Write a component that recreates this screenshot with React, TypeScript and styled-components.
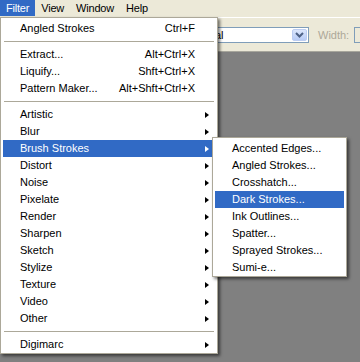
import React from "react";
import styled, { createGlobalStyle } from "styled-components";

const GlobalStyle = createGlobalStyle`
  html, body { margin: 0; padding: 0; background: #808080; }
  body {
    font-family: "Liberation Sans", Arial, sans-serif;
    font-size: 11px;
    color: #000;
  }
`;

const Page = styled.div`
  position: relative;
  width: 360px;
  height: 362px;
  overflow: hidden;
  display: flex;
  flex-direction: column;
  background: #808080;
`;

const MenuBar = styled.div`
  height: 17px;
  background: #ece9d8;
  display: flex;
  align-items: flex-start;
  letter-spacing: -0.2px;
`;

const MenuTitle = styled.div<{ $active?: boolean }>`
  height: 16px;
  line-height: 16px;
  padding: 0 6px;
  background: ${(p) => (p.$active ? "#316ac5" : "transparent")};
  color: ${(p) => (p.$active ? "#fff" : "#000")};
`;

const Toolbar = styled.div`
  height: 33px;
  border-top: 1px solid #ffffff;
  border-bottom: 1px solid #a7a69c;
  background: #ece9d8;
  display: flex;
  align-items: center;
  padding-left: 181px;
  & > * {
    flex-shrink: 0;
  }
`;

const Combo = styled.div`
  box-sizing: border-box;
  width: 128px;
  height: 16px;
  border: 1px solid #7f9db9;
  background: #fff;
  display: flex;
  align-items: center;
  padding-left: 6px;
`;

const ComboText = styled.span`
  flex: 1;
`;

const DropButton = styled.div`
  box-sizing: border-box;
  width: 15px;
  height: 12px;
  margin-right: 1px;
  border-radius: 2px;
  border: 1px solid #bccdf2;
  background: linear-gradient(#dbe6fc, #b7cbf6);
  display: flex;
  align-items: center;
  justify-content: center;
`;

const WidthLabel = styled.span`
  color: #aca899;
  white-space: nowrap;
  margin-left: 9px;
`;

const WidthBox = styled.div`
  box-sizing: border-box;
  width: 30px;
  height: 16px;
  border: 1px solid #7f9db9;
  margin-left: 5px;
`;

const Canvas = styled.div`
  flex: 1;
  background: #808080;
`;

const MenuPanel = styled.div<{ $width: number }>`
  box-sizing: border-box;
  width: ${(p) => p.$width}px;
  background: #fff;
  border: 1px solid #aca899;
  padding: 2px 2px 0 2px;
  box-shadow: 2px 2px 3px rgba(0, 0, 0, 0.55);
`;

const MainMenu = styled(MenuPanel)`
  position: absolute;
  top: 17px;
  left: 0;
  z-index: 10;
`;

const SubMenu = styled(MenuPanel)`
  position: absolute;
  top: -3px;
  left: calc(100% - 3px);
  z-index: 11;
  color: #000;
`;

const Item = styled.div<{ $active?: boolean }>`
  position: relative;
  height: 17px;
  line-height: 17px;
  display: grid;
  grid-template-columns: 1fr auto 4px;
  column-gap: 10px;
  align-items: center;
  padding: 0 6px 0 17px;
  white-space: nowrap;
  background: ${(p) => (p.$active ? "#316ac5" : "transparent")};
  color: ${(p) => (p.$active ? "#fff" : "#000")};
`;

const SubItem = styled.div<{ $active?: boolean }>`
  height: 17px;
  line-height: 17px;
  padding: 0 6px 0 17px;
  white-space: nowrap;
  background: ${(p) => (p.$active ? "#316ac5" : "transparent")};
  color: ${(p) => (p.$active ? "#fff" : "#000")};
`;

const Shortcut = styled.span`
  text-align: right;
`;

const Arrow = styled.span<{ $active?: boolean }>`
  width: 0;
  height: 0;
  border-top: 3.5px solid transparent;
  border-bottom: 3.5px solid transparent;
  border-left: 4px solid ${(p) => (p.$active ? "#fff" : "#000")};
`;

const Separator = styled.div`
  height: 9px;
  display: flex;
  align-items: center;
  padding: 0 1px;
  &::after {
    content: "";
    flex: 1;
    height: 1px;
    background: #aca899;
  }
`;

type Entry =
  | { sep: true }
  | { label: string; shortcut?: string; sub?: boolean; active?: boolean };

const entries: Entry[] = [
  { label: "Angled Strokes", shortcut: "Ctrl+F" },
  { sep: true },
  { label: "Extract...", shortcut: "Alt+Ctrl+X" },
  { label: "Liquify...", shortcut: "Shft+Ctrl+X" },
  { label: "Pattern Maker...", shortcut: "Alt+Shft+Ctrl+X" },
  { sep: true },
  { label: "Artistic", sub: true },
  { label: "Blur", sub: true },
  { label: "Brush Strokes", sub: true, active: true },
  { label: "Distort", sub: true },
  { label: "Noise", sub: true },
  { label: "Pixelate", sub: true },
  { label: "Render", sub: true },
  { label: "Sharpen", sub: true },
  { label: "Sketch", sub: true },
  { label: "Stylize", sub: true },
  { label: "Texture", sub: true },
  { label: "Video", sub: true },
  { label: "Other", sub: true },
  { sep: true },
  { label: "Digimarc", sub: true },
];

const subEntries = [
  "Accented Edges...",
  "Angled Strokes...",
  "Crosshatch...",
  "Dark Strokes...",
  "Ink Outlines...",
  "Spatter...",
  "Sprayed Strokes...",
  "Sumi-e...",
];

const Chevron = () => (
  <svg width="9" height="6" viewBox="0 0 9 6">
    <path d="M1 1 L4.5 4.5 L8 1" fill="none" stroke="#4d6185" strokeWidth="2" />
  </svg>
);

export default function App() {
  return (
    <Page>
      <GlobalStyle />
      <MenuBar>
        <MenuTitle $active>Filter</MenuTitle>
        <MenuTitle>View</MenuTitle>
        <MenuTitle>Window</MenuTitle>
        <MenuTitle>Help</MenuTitle>
      </MenuBar>
      <Toolbar>
        <Combo>
          <ComboText>Normal</ComboText>
          <DropButton>
            <Chevron />
          </DropButton>
        </Combo>
        <WidthLabel>Width:</WidthLabel>
        <WidthBox />
      </Toolbar>
      <Canvas />
      <MainMenu $width={218}>
        {entries.map((e, i) =>
          "sep" in e ? (
            <Separator key={i} />
          ) : (
            <Item key={i} $active={e.active}>
              <span>{e.label}</span>
              <Shortcut>{e.shortcut ?? ""}</Shortcut>
              {e.sub ? <Arrow $active={e.active} /> : <span />}
              {e.active && (
                <SubMenu $width={135}>
                  {subEntries.map((s) => (
                    <SubItem key={s} $active={s === "Dark Strokes..."}>
                      {s}
                    </SubItem>
                  ))}
                </SubMenu>
              )}
            </Item>
          )
        )}
      </MainMenu>
    </Page>
  );
}
